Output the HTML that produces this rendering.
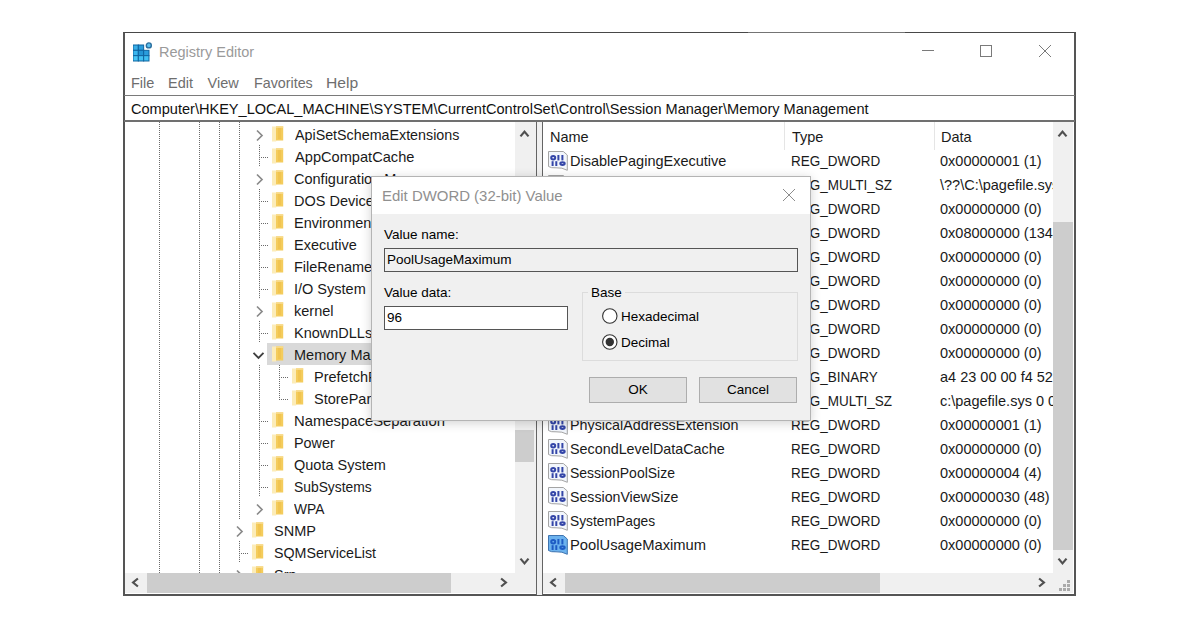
<!DOCTYPE html><html><head><meta charset="utf-8"><style>
html,body{margin:0;padding:0;background:#fff;width:1200px;height:628px;overflow:hidden;position:relative}
.t{position:absolute;white-space:nowrap;font-family:"Liberation Sans", sans-serif}
</style></head><body>
<div style="position:absolute;left:123px;top:32px;width:953px;height:564px;background:#fff;box-sizing:border-box;border-top:1px solid #484848;border-left:2px solid #555;border-right:2px solid #555;border-bottom:2px solid #555"></div>
<div style="position:absolute;left:748px;top:32px;width:157px;height:1px;background:#747474"></div>
<svg style="position:absolute;left:133px;top:42px" width="20" height="20" viewBox="0 0 20 20"><rect x="0.00" y="3.00" width="5.33" height="5.33" fill="#3aaee6" stroke="#0f64a0" stroke-width="1"/><rect x="5.33" y="3.00" width="5.33" height="5.33" fill="#2a9ddc" stroke="#0f64a0" stroke-width="1"/><rect x="0.00" y="8.33" width="5.33" height="5.33" fill="#3ab6ee" stroke="#0f64a0" stroke-width="1"/><rect x="5.33" y="8.33" width="5.33" height="5.33" fill="#2294d4" stroke="#0f64a0" stroke-width="1"/><rect x="10.66" y="8.33" width="5.33" height="5.33" fill="#2a9ddc" stroke="#0f64a0" stroke-width="1"/><rect x="0.00" y="13.66" width="5.33" height="5.33" fill="#48c6f6" stroke="#0f64a0" stroke-width="1"/><rect x="5.33" y="13.66" width="5.33" height="5.33" fill="#40c0f2" stroke="#0f64a0" stroke-width="1"/><rect x="10.66" y="13.66" width="5.33" height="5.33" fill="#40c0f2" stroke="#0f64a0" stroke-width="1"/><circle cx="15.8" cy="3.4" r="2.5" fill="#5cc0ee" stroke="#2a6e9e" stroke-width="1.4"/></svg>
<div class="t" style="left:159px;top:41.5px;font-size:14.5px;line-height:20px;color:#9a9a9a;">Registry Editor</div>
<svg style="position:absolute;left:915px;top:40px" width="145" height="22" viewBox="0 0 145 22"><line x1="7" y1="10.5" x2="19" y2="10.5" stroke="#7a7a7a" stroke-width="1"/><rect x="65.5" y="5.5" width="11" height="11" fill="none" stroke="#7a7a7a" stroke-width="1"/><line x1="124" y1="5" x2="136" y2="17" stroke="#7a7a7a" stroke-width="1"/><line x1="136" y1="5" x2="124" y2="17" stroke="#7a7a7a" stroke-width="1"/></svg>
<div class="t" style="left:131px;top:73px;font-size:14.5px;line-height:20px;color:#6e6e6e;">File</div>
<div class="t" style="left:168px;top:73px;font-size:14.5px;line-height:20px;color:#6e6e6e;">Edit</div>
<div class="t" style="left:207.5px;top:73px;font-size:14.5px;line-height:20px;color:#6e6e6e;">View</div>
<div class="t" style="left:253.5px;top:73px;font-size:14.5px;line-height:20px;color:#6e6e6e;transform:scaleX(0.985);transform-origin:0 0;">Favorites</div>
<div class="t" style="left:326px;top:73px;font-size:14.5px;line-height:20px;color:#6e6e6e;transform:scaleX(1.08);transform-origin:0 0;">Help</div>
<div style="position:absolute;left:124px;top:95px;width:951px;height:1px;background:#7a7a7a"></div>
<div style="position:absolute;left:124px;top:120px;width:951px;height:2px;background:#707070"></div>
<div class="t" style="left:131px;top:99px;font-size:14.5px;line-height:20px;color:#111;transform:scaleX(1.0035);transform-origin:0 0;">Computer\HKEY_LOCAL_MACHINE\SYSTEM\CurrentControlSet\Control\Session Manager\Memory Management</div>
<div style="position:absolute;left:125px;top:122px;width:390px;height:451px;overflow:hidden">
<div style="position:absolute;left:34px;top:0px;width:1px;height:451px;background:repeating-linear-gradient(to bottom,#6a6a6a 0 1px,transparent 1px 2px)"></div>
<div style="position:absolute;left:74px;top:0px;width:1px;height:451px;background:repeating-linear-gradient(to bottom,#6a6a6a 0 1px,transparent 1px 2px)"></div>
<div style="position:absolute;left:94px;top:0px;width:1px;height:451px;background:repeating-linear-gradient(to bottom,#6a6a6a 0 1px,transparent 1px 2px)"></div>
<div style="position:absolute;left:114px;top:0px;width:1px;height:397px;background:repeating-linear-gradient(to bottom,#6a6a6a 0 1px,transparent 1px 2px)"></div>
<div style="position:absolute;left:134px;top:23px;width:1px;height:22px;background:repeating-linear-gradient(to bottom,#6a6a6a 0 1px,transparent 1px 2px)"></div>
<div style="position:absolute;left:134px;top:67px;width:1px;height:22px;background:repeating-linear-gradient(to bottom,#6a6a6a 0 1px,transparent 1px 2px)"></div>
<div style="position:absolute;left:134px;top:89px;width:1px;height:22px;background:repeating-linear-gradient(to bottom,#6a6a6a 0 1px,transparent 1px 2px)"></div>
<div style="position:absolute;left:134px;top:111px;width:1px;height:22px;background:repeating-linear-gradient(to bottom,#6a6a6a 0 1px,transparent 1px 2px)"></div>
<div style="position:absolute;left:134px;top:133px;width:1px;height:22px;background:repeating-linear-gradient(to bottom,#6a6a6a 0 1px,transparent 1px 2px)"></div>
<div style="position:absolute;left:134px;top:155px;width:1px;height:22px;background:repeating-linear-gradient(to bottom,#6a6a6a 0 1px,transparent 1px 2px)"></div>
<div style="position:absolute;left:134px;top:199px;width:1px;height:22px;background:repeating-linear-gradient(to bottom,#6a6a6a 0 1px,transparent 1px 2px)"></div>
<div style="position:absolute;left:134px;top:243px;width:1px;height:22px;background:repeating-linear-gradient(to bottom,#6a6a6a 0 1px,transparent 1px 2px)"></div>
<div style="position:absolute;left:134px;top:265px;width:1px;height:22px;background:repeating-linear-gradient(to bottom,#6a6a6a 0 1px,transparent 1px 2px)"></div>
<div style="position:absolute;left:134px;top:287px;width:1px;height:22px;background:repeating-linear-gradient(to bottom,#6a6a6a 0 1px,transparent 1px 2px)"></div>
<div style="position:absolute;left:134px;top:309px;width:1px;height:22px;background:repeating-linear-gradient(to bottom,#6a6a6a 0 1px,transparent 1px 2px)"></div>
<div style="position:absolute;left:134px;top:331px;width:1px;height:22px;background:repeating-linear-gradient(to bottom,#6a6a6a 0 1px,transparent 1px 2px)"></div>
<div style="position:absolute;left:134px;top:353px;width:1px;height:22px;background:repeating-linear-gradient(to bottom,#6a6a6a 0 1px,transparent 1px 2px)"></div>
<div style="position:absolute;left:154px;top:243px;width:1px;height:34px;background:repeating-linear-gradient(to bottom,#6a6a6a 0 1px,transparent 1px 2px)"></div>
<div style="position:absolute;left:114px;top:419px;width:1px;height:22px;background:repeating-linear-gradient(to bottom,#6a6a6a 0 1px,transparent 1px 2px)"></div>
<svg style="position:absolute;left:147px;top:4px" width="13" height="16" viewBox="0 0 13 16"><rect x="0" y="0.5" width="4.2" height="15" fill="#fcecb8"/><rect x="4" y="0.3" width="7.2" height="14.2" fill="#f4cc5c"/><rect x="6" y="2" width="3" height="11" fill="#f1c450"/><rect x="4" y="0.3" width="7.2" height="1.5" fill="#f8dd92"/></svg>
<div class="t" style="left:170px;top:3px;font-size:14.5px;line-height:20px;color:#1a1a1a;transform:scaleX(0.985);transform-origin:0 0;">ApiSetSchemaExtensions</div>
<div style="position:absolute;left:134px;top:35px;width:9px;height:1px;background:repeating-linear-gradient(to right,#6a6a6a 0 1px,transparent 1px 2px)"></div>
<svg style="position:absolute;left:147px;top:26px" width="13" height="16" viewBox="0 0 13 16"><rect x="0" y="0.5" width="4.2" height="15" fill="#fcecb8"/><rect x="4" y="0.3" width="7.2" height="14.2" fill="#f4cc5c"/><rect x="6" y="2" width="3" height="11" fill="#f1c450"/><rect x="4" y="0.3" width="7.2" height="1.5" fill="#f8dd92"/></svg>
<div class="t" style="left:170px;top:25px;font-size:14.5px;line-height:20px;color:#1a1a1a;transform:scaleX(1.008);transform-origin:0 0;">AppCompatCache</div>
<svg style="position:absolute;left:147px;top:48px" width="13" height="16" viewBox="0 0 13 16"><rect x="0" y="0.5" width="4.2" height="15" fill="#fcecb8"/><rect x="4" y="0.3" width="7.2" height="14.2" fill="#f4cc5c"/><rect x="6" y="2" width="3" height="11" fill="#f1c450"/><rect x="4" y="0.3" width="7.2" height="1.5" fill="#f8dd92"/></svg>
<div class="t" style="left:169px;top:47px;font-size:14.5px;line-height:20px;color:#1a1a1a;">Configuration Manager</div>
<div style="position:absolute;left:134px;top:79px;width:9px;height:1px;background:repeating-linear-gradient(to right,#6a6a6a 0 1px,transparent 1px 2px)"></div>
<svg style="position:absolute;left:147px;top:70px" width="13" height="16" viewBox="0 0 13 16"><rect x="0" y="0.5" width="4.2" height="15" fill="#fcecb8"/><rect x="4" y="0.3" width="7.2" height="14.2" fill="#f4cc5c"/><rect x="6" y="2" width="3" height="11" fill="#f1c450"/><rect x="4" y="0.3" width="7.2" height="1.5" fill="#f8dd92"/></svg>
<div class="t" style="left:169px;top:69px;font-size:14.5px;line-height:20px;color:#1a1a1a;">DOS Devices</div>
<div style="position:absolute;left:134px;top:101px;width:9px;height:1px;background:repeating-linear-gradient(to right,#6a6a6a 0 1px,transparent 1px 2px)"></div>
<svg style="position:absolute;left:147px;top:92px" width="13" height="16" viewBox="0 0 13 16"><rect x="0" y="0.5" width="4.2" height="15" fill="#fcecb8"/><rect x="4" y="0.3" width="7.2" height="14.2" fill="#f4cc5c"/><rect x="6" y="2" width="3" height="11" fill="#f1c450"/><rect x="4" y="0.3" width="7.2" height="1.5" fill="#f8dd92"/></svg>
<div class="t" style="left:169px;top:91px;font-size:14.5px;line-height:20px;color:#1a1a1a;">Environment</div>
<div style="position:absolute;left:134px;top:123px;width:9px;height:1px;background:repeating-linear-gradient(to right,#6a6a6a 0 1px,transparent 1px 2px)"></div>
<svg style="position:absolute;left:147px;top:114px" width="13" height="16" viewBox="0 0 13 16"><rect x="0" y="0.5" width="4.2" height="15" fill="#fcecb8"/><rect x="4" y="0.3" width="7.2" height="14.2" fill="#f4cc5c"/><rect x="6" y="2" width="3" height="11" fill="#f1c450"/><rect x="4" y="0.3" width="7.2" height="1.5" fill="#f8dd92"/></svg>
<div class="t" style="left:169px;top:113px;font-size:14.5px;line-height:20px;color:#1a1a1a;">Executive</div>
<div style="position:absolute;left:134px;top:145px;width:9px;height:1px;background:repeating-linear-gradient(to right,#6a6a6a 0 1px,transparent 1px 2px)"></div>
<svg style="position:absolute;left:147px;top:136px" width="13" height="16" viewBox="0 0 13 16"><rect x="0" y="0.5" width="4.2" height="15" fill="#fcecb8"/><rect x="4" y="0.3" width="7.2" height="14.2" fill="#f4cc5c"/><rect x="6" y="2" width="3" height="11" fill="#f1c450"/><rect x="4" y="0.3" width="7.2" height="1.5" fill="#f8dd92"/></svg>
<div class="t" style="left:169px;top:135px;font-size:14.5px;line-height:20px;color:#1a1a1a;">FileRenameOperations</div>
<div style="position:absolute;left:134px;top:167px;width:9px;height:1px;background:repeating-linear-gradient(to right,#6a6a6a 0 1px,transparent 1px 2px)"></div>
<svg style="position:absolute;left:147px;top:158px" width="13" height="16" viewBox="0 0 13 16"><rect x="0" y="0.5" width="4.2" height="15" fill="#fcecb8"/><rect x="4" y="0.3" width="7.2" height="14.2" fill="#f4cc5c"/><rect x="6" y="2" width="3" height="11" fill="#f1c450"/><rect x="4" y="0.3" width="7.2" height="1.5" fill="#f8dd92"/></svg>
<div class="t" style="left:169px;top:157px;font-size:14.5px;line-height:20px;color:#1a1a1a;">I/O System</div>
<svg style="position:absolute;left:147px;top:180px" width="13" height="16" viewBox="0 0 13 16"><rect x="0" y="0.5" width="4.2" height="15" fill="#fcecb8"/><rect x="4" y="0.3" width="7.2" height="14.2" fill="#f4cc5c"/><rect x="6" y="2" width="3" height="11" fill="#f1c450"/><rect x="4" y="0.3" width="7.2" height="1.5" fill="#f8dd92"/></svg>
<div class="t" style="left:169px;top:179px;font-size:14.5px;line-height:20px;color:#1a1a1a;">kernel</div>
<div style="position:absolute;left:134px;top:211px;width:9px;height:1px;background:repeating-linear-gradient(to right,#6a6a6a 0 1px,transparent 1px 2px)"></div>
<svg style="position:absolute;left:147px;top:202px" width="13" height="16" viewBox="0 0 13 16"><rect x="0" y="0.5" width="4.2" height="15" fill="#fcecb8"/><rect x="4" y="0.3" width="7.2" height="14.2" fill="#f4cc5c"/><rect x="6" y="2" width="3" height="11" fill="#f1c450"/><rect x="4" y="0.3" width="7.2" height="1.5" fill="#f8dd92"/></svg>
<div class="t" style="left:169px;top:201px;font-size:14.5px;line-height:20px;color:#1a1a1a;">KnownDLLs</div>
<div style="position:absolute;left:142px;top:221px;width:300px;height:22px;background:#d9d9d9"></div>
<svg style="position:absolute;left:147px;top:224px" width="13" height="16" viewBox="0 0 13 16"><rect x="0" y="0.5" width="4.2" height="15" fill="#fcecb8"/><rect x="4" y="0.3" width="7.2" height="14.2" fill="#f4cc5c"/><rect x="6" y="2" width="3" height="11" fill="#f1c450"/><rect x="4" y="0.3" width="7.2" height="1.5" fill="#f8dd92"/></svg>
<div class="t" style="left:169px;top:223px;font-size:14.5px;line-height:20px;color:#1a1a1a;">Memory Management</div>
<div style="position:absolute;left:154px;top:255px;width:9px;height:1px;background:repeating-linear-gradient(to right,#6a6a6a 0 1px,transparent 1px 2px)"></div>
<svg style="position:absolute;left:167px;top:246px" width="13" height="16" viewBox="0 0 13 16"><rect x="0" y="0.5" width="4.2" height="15" fill="#fcecb8"/><rect x="4" y="0.3" width="7.2" height="14.2" fill="#f4cc5c"/><rect x="6" y="2" width="3" height="11" fill="#f1c450"/><rect x="4" y="0.3" width="7.2" height="1.5" fill="#f8dd92"/></svg>
<div class="t" style="left:189px;top:245px;font-size:14.5px;line-height:20px;color:#1a1a1a;">PrefetchParameters</div>
<div style="position:absolute;left:154px;top:277px;width:9px;height:1px;background:repeating-linear-gradient(to right,#6a6a6a 0 1px,transparent 1px 2px)"></div>
<svg style="position:absolute;left:167px;top:268px" width="13" height="16" viewBox="0 0 13 16"><rect x="0" y="0.5" width="4.2" height="15" fill="#fcecb8"/><rect x="4" y="0.3" width="7.2" height="14.2" fill="#f4cc5c"/><rect x="6" y="2" width="3" height="11" fill="#f1c450"/><rect x="4" y="0.3" width="7.2" height="1.5" fill="#f8dd92"/></svg>
<div class="t" style="left:189px;top:267px;font-size:14.5px;line-height:20px;color:#1a1a1a;">StoreParameters</div>
<div style="position:absolute;left:134px;top:299px;width:9px;height:1px;background:repeating-linear-gradient(to right,#6a6a6a 0 1px,transparent 1px 2px)"></div>
<svg style="position:absolute;left:147px;top:290px" width="13" height="16" viewBox="0 0 13 16"><rect x="0" y="0.5" width="4.2" height="15" fill="#fcecb8"/><rect x="4" y="0.3" width="7.2" height="14.2" fill="#f4cc5c"/><rect x="6" y="2" width="3" height="11" fill="#f1c450"/><rect x="4" y="0.3" width="7.2" height="1.5" fill="#f8dd92"/></svg>
<div class="t" style="left:169px;top:289px;font-size:14.5px;line-height:20px;color:#1a1a1a;transform:scaleX(1.023);transform-origin:0 0;">NamespaceSeparation</div>
<div style="position:absolute;left:134px;top:321px;width:9px;height:1px;background:repeating-linear-gradient(to right,#6a6a6a 0 1px,transparent 1px 2px)"></div>
<svg style="position:absolute;left:147px;top:312px" width="13" height="16" viewBox="0 0 13 16"><rect x="0" y="0.5" width="4.2" height="15" fill="#fcecb8"/><rect x="4" y="0.3" width="7.2" height="14.2" fill="#f4cc5c"/><rect x="6" y="2" width="3" height="11" fill="#f1c450"/><rect x="4" y="0.3" width="7.2" height="1.5" fill="#f8dd92"/></svg>
<div class="t" style="left:169px;top:311px;font-size:14.5px;line-height:20px;color:#1a1a1a;transform:scaleX(0.99);transform-origin:0 0;">Power</div>
<div style="position:absolute;left:134px;top:343px;width:9px;height:1px;background:repeating-linear-gradient(to right,#6a6a6a 0 1px,transparent 1px 2px)"></div>
<svg style="position:absolute;left:147px;top:334px" width="13" height="16" viewBox="0 0 13 16"><rect x="0" y="0.5" width="4.2" height="15" fill="#fcecb8"/><rect x="4" y="0.3" width="7.2" height="14.2" fill="#f4cc5c"/><rect x="6" y="2" width="3" height="11" fill="#f1c450"/><rect x="4" y="0.3" width="7.2" height="1.5" fill="#f8dd92"/></svg>
<div class="t" style="left:169px;top:333px;font-size:14.5px;line-height:20px;color:#1a1a1a;">Quota System</div>
<div style="position:absolute;left:134px;top:365px;width:9px;height:1px;background:repeating-linear-gradient(to right,#6a6a6a 0 1px,transparent 1px 2px)"></div>
<svg style="position:absolute;left:147px;top:356px" width="13" height="16" viewBox="0 0 13 16"><rect x="0" y="0.5" width="4.2" height="15" fill="#fcecb8"/><rect x="4" y="0.3" width="7.2" height="14.2" fill="#f4cc5c"/><rect x="6" y="2" width="3" height="11" fill="#f1c450"/><rect x="4" y="0.3" width="7.2" height="1.5" fill="#f8dd92"/></svg>
<div class="t" style="left:169px;top:355px;font-size:14.5px;line-height:20px;color:#1a1a1a;transform:scaleX(0.955);transform-origin:0 0;">SubSystems</div>
<svg style="position:absolute;left:147px;top:378px" width="13" height="16" viewBox="0 0 13 16"><rect x="0" y="0.5" width="4.2" height="15" fill="#fcecb8"/><rect x="4" y="0.3" width="7.2" height="14.2" fill="#f4cc5c"/><rect x="6" y="2" width="3" height="11" fill="#f1c450"/><rect x="4" y="0.3" width="7.2" height="1.5" fill="#f8dd92"/></svg>
<div class="t" style="left:169px;top:377px;font-size:14.5px;line-height:20px;color:#1a1a1a;transform:scaleX(0.95);transform-origin:0 0;">WPA</div>
<svg style="position:absolute;left:127px;top:400px" width="13" height="16" viewBox="0 0 13 16"><rect x="0" y="0.5" width="4.2" height="15" fill="#fcecb8"/><rect x="4" y="0.3" width="7.2" height="14.2" fill="#f4cc5c"/><rect x="6" y="2" width="3" height="11" fill="#f1c450"/><rect x="4" y="0.3" width="7.2" height="1.5" fill="#f8dd92"/></svg>
<div class="t" style="left:149px;top:399px;font-size:14.5px;line-height:20px;color:#1a1a1a;">SNMP</div>
<div style="position:absolute;left:114px;top:431px;width:9px;height:1px;background:repeating-linear-gradient(to right,#6a6a6a 0 1px,transparent 1px 2px)"></div>
<svg style="position:absolute;left:127px;top:422px" width="13" height="16" viewBox="0 0 13 16"><rect x="0" y="0.5" width="4.2" height="15" fill="#fcecb8"/><rect x="4" y="0.3" width="7.2" height="14.2" fill="#f4cc5c"/><rect x="6" y="2" width="3" height="11" fill="#f1c450"/><rect x="4" y="0.3" width="7.2" height="1.5" fill="#f8dd92"/></svg>
<div class="t" style="left:149px;top:421px;font-size:14.5px;line-height:20px;color:#1a1a1a;transform:scaleX(0.982);transform-origin:0 0;">SQMServiceList</div>
<svg style="position:absolute;left:127px;top:444px" width="13" height="16" viewBox="0 0 13 16"><rect x="0" y="0.5" width="4.2" height="15" fill="#fcecb8"/><rect x="4" y="0.3" width="7.2" height="14.2" fill="#f4cc5c"/><rect x="6" y="2" width="3" height="11" fill="#f1c450"/><rect x="4" y="0.3" width="7.2" height="1.5" fill="#f8dd92"/></svg>
<div class="t" style="left:149px;top:443px;font-size:14.5px;line-height:20px;color:#1a1a1a;">Srp</div>
<svg style="position:absolute;left:0;top:0" width="390" height="451"><polyline points="132.0,8.5 137.0,13.5 132.0,18.5" fill="none" stroke="#8a8a8a" stroke-width="1.7"/><polyline points="132.0,52.5 137.0,57.5 132.0,62.5" fill="none" stroke="#8a8a8a" stroke-width="1.7"/><polyline points="132.0,184.5 137.0,189.5 132.0,194.5" fill="none" stroke="#8a8a8a" stroke-width="1.7"/><polyline points="128.5,230.8 133.5,235.8 138.5,230.8" fill="none" stroke="#404040" stroke-width="1.9"/><polyline points="132.0,382.5 137.0,387.5 132.0,392.5" fill="none" stroke="#8a8a8a" stroke-width="1.7"/><polyline points="112.0,404.5 117.0,409.5 112.0,414.5" fill="none" stroke="#8a8a8a" stroke-width="1.7"/><polyline points="112.0,448.5 117.0,453.5 112.0,458.5" fill="none" stroke="#8a8a8a" stroke-width="1.7"/></svg>
</div>
<div style="position:absolute;left:515px;top:122px;width:21px;height:451px;background:#f0f0f0"></div>
<div style="position:absolute;left:515px;top:430px;width:19px;height:32px;background:#cdcdcd"></div>
<div style="position:absolute;left:125px;top:573px;width:411px;height:20px;background:#f0f0f0"></div>
<div style="position:absolute;left:147px;top:573px;width:304px;height:20px;background:#cdcdcd"></div>
<div style="position:absolute;left:536px;top:122px;width:1px;height:473px;background:#646464"></div>
<div style="position:absolute;left:537px;top:122px;width:5px;height:473px;background:#f0f0f0"></div>
<div style="position:absolute;left:542px;top:122px;width:1px;height:473px;background:#646464"></div>
<div style="position:absolute;left:543px;top:122px;width:510px;height:451px;overflow:hidden">
<div style="position:absolute;left:241px;top:0px;width:1px;height:28px;background:#e5e5e5"></div>
<div style="position:absolute;left:391px;top:0px;width:1px;height:28px;background:#e5e5e5"></div>
<div class="t" style="left:7px;top:5px;font-size:14.5px;line-height:20px;color:#1a1a1a;">Name</div>
<div class="t" style="left:249px;top:5px;font-size:14.5px;line-height:20px;color:#1a1a1a;">Type</div>
<div class="t" style="left:398px;top:5px;font-size:14.5px;line-height:20px;color:#1a1a1a;">Data</div>
<svg style="position:absolute;left:5px;top:29px" width="20" height="20" viewBox="0 0 20 20"><path d="M0.5 0.5 H15.3 L19.3 4 V19.3 Q14 16.3 8 16.8 Q3 17.2 0.5 15.5 Z" fill="#f2f6fc" stroke="#a4a4a4" stroke-width="1"/><ellipse cx="5.2" cy="6.7" rx="2" ry="1.7" fill="none" stroke="#3446a8" stroke-width="2"/><rect x="9.4" y="4" width="2" height="5.4" fill="#3446a8"/><rect x="13.4" y="4" width="2" height="5.4" fill="#3446a8"/><rect x="3.6" y="10.2" width="2" height="4.8" fill="#3446a8"/><rect x="7.3" y="10.2" width="2" height="4.8" fill="#3446a8"/><ellipse cx="14.5" cy="12.6" rx="2.2" ry="1.4" fill="none" stroke="#3446a8" stroke-width="2"/></svg>
<div class="t" style="left:27px;top:29px;font-size:14.5px;line-height:20px;color:#1a1a1a;">DisablePagingExecutive</div>
<div class="t" style="left:248px;top:29px;font-size:14.5px;line-height:20px;color:#1a1a1a;transform:scaleX(0.93);transform-origin:0 0;">REG_DWORD</div>
<div class="t" style="left:397px;top:29px;font-size:14.5px;line-height:20px;color:#1a1a1a;">0x00000001 (1)</div>
<svg style="position:absolute;left:5px;top:53px" width="20" height="20" viewBox="0 0 20 20"><path d="M0.5 0.5 H15.3 L19.3 4 V19.3 Q14 16.3 8 16.8 Q3 17.2 0.5 15.5 Z" fill="#f2f6fc" stroke="#a4a4a4" stroke-width="1"/><ellipse cx="5.2" cy="6.7" rx="2" ry="1.7" fill="none" stroke="#3446a8" stroke-width="2"/><rect x="9.4" y="4" width="2" height="5.4" fill="#3446a8"/><rect x="13.4" y="4" width="2" height="5.4" fill="#3446a8"/><rect x="3.6" y="10.2" width="2" height="4.8" fill="#3446a8"/><rect x="7.3" y="10.2" width="2" height="4.8" fill="#3446a8"/><ellipse cx="14.5" cy="12.6" rx="2.2" ry="1.4" fill="none" stroke="#3446a8" stroke-width="2"/></svg>
<div class="t" style="left:27px;top:53px;font-size:14.5px;line-height:20px;color:#1a1a1a;">ExistingPageFiles</div>
<div class="t" style="left:248px;top:53px;font-size:14.5px;line-height:20px;color:#1a1a1a;transform:scaleX(0.93);transform-origin:0 0;">REG_MULTI_SZ</div>
<div class="t" style="left:397px;top:53px;font-size:14.5px;line-height:20px;color:#1a1a1a;">\??\C:\pagefile.sys</div>
<svg style="position:absolute;left:5px;top:77px" width="20" height="20" viewBox="0 0 20 20"><path d="M0.5 0.5 H15.3 L19.3 4 V19.3 Q14 16.3 8 16.8 Q3 17.2 0.5 15.5 Z" fill="#f2f6fc" stroke="#a4a4a4" stroke-width="1"/><ellipse cx="5.2" cy="6.7" rx="2" ry="1.7" fill="none" stroke="#3446a8" stroke-width="2"/><rect x="9.4" y="4" width="2" height="5.4" fill="#3446a8"/><rect x="13.4" y="4" width="2" height="5.4" fill="#3446a8"/><rect x="3.6" y="10.2" width="2" height="4.8" fill="#3446a8"/><rect x="7.3" y="10.2" width="2" height="4.8" fill="#3446a8"/><ellipse cx="14.5" cy="12.6" rx="2.2" ry="1.4" fill="none" stroke="#3446a8" stroke-width="2"/></svg>
<div class="t" style="left:27px;top:77px;font-size:14.5px;line-height:20px;color:#1a1a1a;">LargeSystemCache</div>
<div class="t" style="left:248px;top:77px;font-size:14.5px;line-height:20px;color:#1a1a1a;transform:scaleX(0.93);transform-origin:0 0;">REG_DWORD</div>
<div class="t" style="left:397px;top:77px;font-size:14.5px;line-height:20px;color:#1a1a1a;">0x00000000 (0)</div>
<svg style="position:absolute;left:5px;top:101px" width="20" height="20" viewBox="0 0 20 20"><path d="M0.5 0.5 H15.3 L19.3 4 V19.3 Q14 16.3 8 16.8 Q3 17.2 0.5 15.5 Z" fill="#f2f6fc" stroke="#a4a4a4" stroke-width="1"/><ellipse cx="5.2" cy="6.7" rx="2" ry="1.7" fill="none" stroke="#3446a8" stroke-width="2"/><rect x="9.4" y="4" width="2" height="5.4" fill="#3446a8"/><rect x="13.4" y="4" width="2" height="5.4" fill="#3446a8"/><rect x="3.6" y="10.2" width="2" height="4.8" fill="#3446a8"/><rect x="7.3" y="10.2" width="2" height="4.8" fill="#3446a8"/><ellipse cx="14.5" cy="12.6" rx="2.2" ry="1.4" fill="none" stroke="#3446a8" stroke-width="2"/></svg>
<div class="t" style="left:27px;top:101px;font-size:14.5px;line-height:20px;color:#1a1a1a;">NonPagedPoolQuota</div>
<div class="t" style="left:248px;top:101px;font-size:14.5px;line-height:20px;color:#1a1a1a;transform:scaleX(0.93);transform-origin:0 0;">REG_DWORD</div>
<div class="t" style="left:397px;top:101px;font-size:14.5px;line-height:20px;color:#1a1a1a;">0x08000000 (134217728)</div>
<svg style="position:absolute;left:5px;top:125px" width="20" height="20" viewBox="0 0 20 20"><path d="M0.5 0.5 H15.3 L19.3 4 V19.3 Q14 16.3 8 16.8 Q3 17.2 0.5 15.5 Z" fill="#f2f6fc" stroke="#a4a4a4" stroke-width="1"/><ellipse cx="5.2" cy="6.7" rx="2" ry="1.7" fill="none" stroke="#3446a8" stroke-width="2"/><rect x="9.4" y="4" width="2" height="5.4" fill="#3446a8"/><rect x="13.4" y="4" width="2" height="5.4" fill="#3446a8"/><rect x="3.6" y="10.2" width="2" height="4.8" fill="#3446a8"/><rect x="7.3" y="10.2" width="2" height="4.8" fill="#3446a8"/><ellipse cx="14.5" cy="12.6" rx="2.2" ry="1.4" fill="none" stroke="#3446a8" stroke-width="2"/></svg>
<div class="t" style="left:27px;top:125px;font-size:14.5px;line-height:20px;color:#1a1a1a;">NonPagedPoolSize</div>
<div class="t" style="left:248px;top:125px;font-size:14.5px;line-height:20px;color:#1a1a1a;transform:scaleX(0.93);transform-origin:0 0;">REG_DWORD</div>
<div class="t" style="left:397px;top:125px;font-size:14.5px;line-height:20px;color:#1a1a1a;">0x00000000 (0)</div>
<svg style="position:absolute;left:5px;top:149px" width="20" height="20" viewBox="0 0 20 20"><path d="M0.5 0.5 H15.3 L19.3 4 V19.3 Q14 16.3 8 16.8 Q3 17.2 0.5 15.5 Z" fill="#f2f6fc" stroke="#a4a4a4" stroke-width="1"/><ellipse cx="5.2" cy="6.7" rx="2" ry="1.7" fill="none" stroke="#3446a8" stroke-width="2"/><rect x="9.4" y="4" width="2" height="5.4" fill="#3446a8"/><rect x="13.4" y="4" width="2" height="5.4" fill="#3446a8"/><rect x="3.6" y="10.2" width="2" height="4.8" fill="#3446a8"/><rect x="7.3" y="10.2" width="2" height="4.8" fill="#3446a8"/><ellipse cx="14.5" cy="12.6" rx="2.2" ry="1.4" fill="none" stroke="#3446a8" stroke-width="2"/></svg>
<div class="t" style="left:27px;top:149px;font-size:14.5px;line-height:20px;color:#1a1a1a;">PagedPoolQuota</div>
<div class="t" style="left:248px;top:149px;font-size:14.5px;line-height:20px;color:#1a1a1a;transform:scaleX(0.93);transform-origin:0 0;">REG_DWORD</div>
<div class="t" style="left:397px;top:149px;font-size:14.5px;line-height:20px;color:#1a1a1a;">0x00000000 (0)</div>
<svg style="position:absolute;left:5px;top:173px" width="20" height="20" viewBox="0 0 20 20"><path d="M0.5 0.5 H15.3 L19.3 4 V19.3 Q14 16.3 8 16.8 Q3 17.2 0.5 15.5 Z" fill="#f2f6fc" stroke="#a4a4a4" stroke-width="1"/><ellipse cx="5.2" cy="6.7" rx="2" ry="1.7" fill="none" stroke="#3446a8" stroke-width="2"/><rect x="9.4" y="4" width="2" height="5.4" fill="#3446a8"/><rect x="13.4" y="4" width="2" height="5.4" fill="#3446a8"/><rect x="3.6" y="10.2" width="2" height="4.8" fill="#3446a8"/><rect x="7.3" y="10.2" width="2" height="4.8" fill="#3446a8"/><ellipse cx="14.5" cy="12.6" rx="2.2" ry="1.4" fill="none" stroke="#3446a8" stroke-width="2"/></svg>
<div class="t" style="left:27px;top:173px;font-size:14.5px;line-height:20px;color:#1a1a1a;">PagedPoolSize</div>
<div class="t" style="left:248px;top:173px;font-size:14.5px;line-height:20px;color:#1a1a1a;transform:scaleX(0.93);transform-origin:0 0;">REG_DWORD</div>
<div class="t" style="left:397px;top:173px;font-size:14.5px;line-height:20px;color:#1a1a1a;">0x00000000 (0)</div>
<svg style="position:absolute;left:5px;top:197px" width="20" height="20" viewBox="0 0 20 20"><path d="M0.5 0.5 H15.3 L19.3 4 V19.3 Q14 16.3 8 16.8 Q3 17.2 0.5 15.5 Z" fill="#f2f6fc" stroke="#a4a4a4" stroke-width="1"/><ellipse cx="5.2" cy="6.7" rx="2" ry="1.7" fill="none" stroke="#3446a8" stroke-width="2"/><rect x="9.4" y="4" width="2" height="5.4" fill="#3446a8"/><rect x="13.4" y="4" width="2" height="5.4" fill="#3446a8"/><rect x="3.6" y="10.2" width="2" height="4.8" fill="#3446a8"/><rect x="7.3" y="10.2" width="2" height="4.8" fill="#3446a8"/><ellipse cx="14.5" cy="12.6" rx="2.2" ry="1.4" fill="none" stroke="#3446a8" stroke-width="2"/></svg>
<div class="t" style="left:27px;top:197px;font-size:14.5px;line-height:20px;color:#1a1a1a;">PagingFiles2</div>
<div class="t" style="left:248px;top:197px;font-size:14.5px;line-height:20px;color:#1a1a1a;transform:scaleX(0.93);transform-origin:0 0;">REG_DWORD</div>
<div class="t" style="left:397px;top:197px;font-size:14.5px;line-height:20px;color:#1a1a1a;">0x00000000 (0)</div>
<svg style="position:absolute;left:5px;top:221px" width="20" height="20" viewBox="0 0 20 20"><path d="M0.5 0.5 H15.3 L19.3 4 V19.3 Q14 16.3 8 16.8 Q3 17.2 0.5 15.5 Z" fill="#f2f6fc" stroke="#a4a4a4" stroke-width="1"/><ellipse cx="5.2" cy="6.7" rx="2" ry="1.7" fill="none" stroke="#3446a8" stroke-width="2"/><rect x="9.4" y="4" width="2" height="5.4" fill="#3446a8"/><rect x="13.4" y="4" width="2" height="5.4" fill="#3446a8"/><rect x="3.6" y="10.2" width="2" height="4.8" fill="#3446a8"/><rect x="7.3" y="10.2" width="2" height="4.8" fill="#3446a8"/><ellipse cx="14.5" cy="12.6" rx="2.2" ry="1.4" fill="none" stroke="#3446a8" stroke-width="2"/></svg>
<div class="t" style="left:27px;top:221px;font-size:14.5px;line-height:20px;color:#1a1a1a;">PagingFiles3</div>
<div class="t" style="left:248px;top:221px;font-size:14.5px;line-height:20px;color:#1a1a1a;transform:scaleX(0.93);transform-origin:0 0;">REG_DWORD</div>
<div class="t" style="left:397px;top:221px;font-size:14.5px;line-height:20px;color:#1a1a1a;">0x00000000 (0)</div>
<svg style="position:absolute;left:5px;top:245px" width="20" height="20" viewBox="0 0 20 20"><path d="M0.5 0.5 H15.3 L19.3 4 V19.3 Q14 16.3 8 16.8 Q3 17.2 0.5 15.5 Z" fill="#f2f6fc" stroke="#a4a4a4" stroke-width="1"/><ellipse cx="5.2" cy="6.7" rx="2" ry="1.7" fill="none" stroke="#3446a8" stroke-width="2"/><rect x="9.4" y="4" width="2" height="5.4" fill="#3446a8"/><rect x="13.4" y="4" width="2" height="5.4" fill="#3446a8"/><rect x="3.6" y="10.2" width="2" height="4.8" fill="#3446a8"/><rect x="7.3" y="10.2" width="2" height="4.8" fill="#3446a8"/><ellipse cx="14.5" cy="12.6" rx="2.2" ry="1.4" fill="none" stroke="#3446a8" stroke-width="2"/></svg>
<div class="t" style="left:27px;top:245px;font-size:14.5px;line-height:20px;color:#1a1a1a;">FeatureSettings</div>
<div class="t" style="left:248px;top:245px;font-size:14.5px;line-height:20px;color:#1a1a1a;transform:scaleX(0.93);transform-origin:0 0;">REG_BINARY</div>
<div class="t" style="left:397px;top:245px;font-size:14.5px;line-height:20px;color:#1a1a1a;">a4 23 00 00 f4 52 00 00</div>
<svg style="position:absolute;left:5px;top:269px" width="20" height="20" viewBox="0 0 20 20"><path d="M0.5 0.5 H15.3 L19.3 4 V19.3 Q14 16.3 8 16.8 Q3 17.2 0.5 15.5 Z" fill="#f2f6fc" stroke="#a4a4a4" stroke-width="1"/><ellipse cx="5.2" cy="6.7" rx="2" ry="1.7" fill="none" stroke="#3446a8" stroke-width="2"/><rect x="9.4" y="4" width="2" height="5.4" fill="#3446a8"/><rect x="13.4" y="4" width="2" height="5.4" fill="#3446a8"/><rect x="3.6" y="10.2" width="2" height="4.8" fill="#3446a8"/><rect x="7.3" y="10.2" width="2" height="4.8" fill="#3446a8"/><ellipse cx="14.5" cy="12.6" rx="2.2" ry="1.4" fill="none" stroke="#3446a8" stroke-width="2"/></svg>
<div class="t" style="left:27px;top:269px;font-size:14.5px;line-height:20px;color:#1a1a1a;">PagingFiles</div>
<div class="t" style="left:248px;top:269px;font-size:14.5px;line-height:20px;color:#1a1a1a;transform:scaleX(0.93);transform-origin:0 0;">REG_MULTI_SZ</div>
<div class="t" style="left:397px;top:269px;font-size:14.5px;line-height:20px;color:#1a1a1a;">c:\pagefile.sys 0 0</div>
<svg style="position:absolute;left:5px;top:293px" width="20" height="20" viewBox="0 0 20 20"><path d="M0.5 0.5 H15.3 L19.3 4 V19.3 Q14 16.3 8 16.8 Q3 17.2 0.5 15.5 Z" fill="#f2f6fc" stroke="#a4a4a4" stroke-width="1"/><ellipse cx="5.2" cy="6.7" rx="2" ry="1.7" fill="none" stroke="#3446a8" stroke-width="2"/><rect x="9.4" y="4" width="2" height="5.4" fill="#3446a8"/><rect x="13.4" y="4" width="2" height="5.4" fill="#3446a8"/><rect x="3.6" y="10.2" width="2" height="4.8" fill="#3446a8"/><rect x="7.3" y="10.2" width="2" height="4.8" fill="#3446a8"/><ellipse cx="14.5" cy="12.6" rx="2.2" ry="1.4" fill="none" stroke="#3446a8" stroke-width="2"/></svg>
<div class="t" style="left:27px;top:293px;font-size:14.5px;line-height:20px;color:#1a1a1a;transform:scaleX(0.986);transform-origin:0 0;">PhysicalAddressExtension</div>
<div class="t" style="left:248px;top:293px;font-size:14.5px;line-height:20px;color:#1a1a1a;transform:scaleX(0.93);transform-origin:0 0;">REG_DWORD</div>
<div class="t" style="left:397px;top:293px;font-size:14.5px;line-height:20px;color:#1a1a1a;">0x00000001 (1)</div>
<svg style="position:absolute;left:5px;top:317px" width="20" height="20" viewBox="0 0 20 20"><path d="M0.5 0.5 H15.3 L19.3 4 V19.3 Q14 16.3 8 16.8 Q3 17.2 0.5 15.5 Z" fill="#f2f6fc" stroke="#a4a4a4" stroke-width="1"/><ellipse cx="5.2" cy="6.7" rx="2" ry="1.7" fill="none" stroke="#3446a8" stroke-width="2"/><rect x="9.4" y="4" width="2" height="5.4" fill="#3446a8"/><rect x="13.4" y="4" width="2" height="5.4" fill="#3446a8"/><rect x="3.6" y="10.2" width="2" height="4.8" fill="#3446a8"/><rect x="7.3" y="10.2" width="2" height="4.8" fill="#3446a8"/><ellipse cx="14.5" cy="12.6" rx="2.2" ry="1.4" fill="none" stroke="#3446a8" stroke-width="2"/></svg>
<div class="t" style="left:27px;top:317px;font-size:14.5px;line-height:20px;color:#1a1a1a;transform:scaleX(0.989);transform-origin:0 0;">SecondLevelDataCache</div>
<div class="t" style="left:248px;top:317px;font-size:14.5px;line-height:20px;color:#1a1a1a;transform:scaleX(0.93);transform-origin:0 0;">REG_DWORD</div>
<div class="t" style="left:397px;top:317px;font-size:14.5px;line-height:20px;color:#1a1a1a;">0x00000000 (0)</div>
<svg style="position:absolute;left:5px;top:341px" width="20" height="20" viewBox="0 0 20 20"><path d="M0.5 0.5 H15.3 L19.3 4 V19.3 Q14 16.3 8 16.8 Q3 17.2 0.5 15.5 Z" fill="#f2f6fc" stroke="#a4a4a4" stroke-width="1"/><ellipse cx="5.2" cy="6.7" rx="2" ry="1.7" fill="none" stroke="#3446a8" stroke-width="2"/><rect x="9.4" y="4" width="2" height="5.4" fill="#3446a8"/><rect x="13.4" y="4" width="2" height="5.4" fill="#3446a8"/><rect x="3.6" y="10.2" width="2" height="4.8" fill="#3446a8"/><rect x="7.3" y="10.2" width="2" height="4.8" fill="#3446a8"/><ellipse cx="14.5" cy="12.6" rx="2.2" ry="1.4" fill="none" stroke="#3446a8" stroke-width="2"/></svg>
<div class="t" style="left:27px;top:341px;font-size:14.5px;line-height:20px;color:#1a1a1a;transform:scaleX(0.965);transform-origin:0 0;">SessionPoolSize</div>
<div class="t" style="left:248px;top:341px;font-size:14.5px;line-height:20px;color:#1a1a1a;transform:scaleX(0.93);transform-origin:0 0;">REG_DWORD</div>
<div class="t" style="left:397px;top:341px;font-size:14.5px;line-height:20px;color:#1a1a1a;">0x00000004 (4)</div>
<svg style="position:absolute;left:5px;top:365px" width="20" height="20" viewBox="0 0 20 20"><path d="M0.5 0.5 H15.3 L19.3 4 V19.3 Q14 16.3 8 16.8 Q3 17.2 0.5 15.5 Z" fill="#f2f6fc" stroke="#a4a4a4" stroke-width="1"/><ellipse cx="5.2" cy="6.7" rx="2" ry="1.7" fill="none" stroke="#3446a8" stroke-width="2"/><rect x="9.4" y="4" width="2" height="5.4" fill="#3446a8"/><rect x="13.4" y="4" width="2" height="5.4" fill="#3446a8"/><rect x="3.6" y="10.2" width="2" height="4.8" fill="#3446a8"/><rect x="7.3" y="10.2" width="2" height="4.8" fill="#3446a8"/><ellipse cx="14.5" cy="12.6" rx="2.2" ry="1.4" fill="none" stroke="#3446a8" stroke-width="2"/></svg>
<div class="t" style="left:27px;top:365px;font-size:14.5px;line-height:20px;color:#1a1a1a;transform:scaleX(0.977);transform-origin:0 0;">SessionViewSize</div>
<div class="t" style="left:248px;top:365px;font-size:14.5px;line-height:20px;color:#1a1a1a;transform:scaleX(0.93);transform-origin:0 0;">REG_DWORD</div>
<div class="t" style="left:397px;top:365px;font-size:14.5px;line-height:20px;color:#1a1a1a;">0x00000030 (48)</div>
<svg style="position:absolute;left:5px;top:389px" width="20" height="20" viewBox="0 0 20 20"><path d="M0.5 0.5 H15.3 L19.3 4 V19.3 Q14 16.3 8 16.8 Q3 17.2 0.5 15.5 Z" fill="#f2f6fc" stroke="#a4a4a4" stroke-width="1"/><ellipse cx="5.2" cy="6.7" rx="2" ry="1.7" fill="none" stroke="#3446a8" stroke-width="2"/><rect x="9.4" y="4" width="2" height="5.4" fill="#3446a8"/><rect x="13.4" y="4" width="2" height="5.4" fill="#3446a8"/><rect x="3.6" y="10.2" width="2" height="4.8" fill="#3446a8"/><rect x="7.3" y="10.2" width="2" height="4.8" fill="#3446a8"/><ellipse cx="14.5" cy="12.6" rx="2.2" ry="1.4" fill="none" stroke="#3446a8" stroke-width="2"/></svg>
<div class="t" style="left:27px;top:389px;font-size:14.5px;line-height:20px;color:#1a1a1a;transform:scaleX(0.952);transform-origin:0 0;">SystemPages</div>
<div class="t" style="left:248px;top:389px;font-size:14.5px;line-height:20px;color:#1a1a1a;transform:scaleX(0.93);transform-origin:0 0;">REG_DWORD</div>
<div class="t" style="left:397px;top:389px;font-size:14.5px;line-height:20px;color:#1a1a1a;">0x00000000 (0)</div>
<svg style="position:absolute;left:5px;top:413px" width="20" height="20" viewBox="0 0 20 20"><path d="M0.5 0.5 H15.3 L19.3 4 V19.3 Q14 16.3 8 16.8 Q3 17.2 0.5 15.5 Z" fill="#6cb2ee" stroke="#3f74b0" stroke-width="1"/><ellipse cx="5.2" cy="6.7" rx="2" ry="1.7" fill="none" stroke="#1e5cc4" stroke-width="2"/><rect x="9.4" y="4" width="2" height="5.4" fill="#1e5cc4"/><rect x="13.4" y="4" width="2" height="5.4" fill="#1e5cc4"/><rect x="3.6" y="10.2" width="2" height="4.8" fill="#1e5cc4"/><rect x="7.3" y="10.2" width="2" height="4.8" fill="#1e5cc4"/><ellipse cx="14.5" cy="12.6" rx="2.2" ry="1.4" fill="none" stroke="#1e5cc4" stroke-width="2"/></svg>
<div class="t" style="left:27px;top:413px;font-size:14.5px;line-height:20px;color:#1a1a1a;transform:scaleX(1.017);transform-origin:0 0;">PoolUsageMaximum</div>
<div class="t" style="left:248px;top:413px;font-size:14.5px;line-height:20px;color:#1a1a1a;transform:scaleX(0.93);transform-origin:0 0;">REG_DWORD</div>
<div class="t" style="left:397px;top:413px;font-size:14.5px;line-height:20px;color:#1a1a1a;">0x00000000 (0)</div>
</div>
<div style="position:absolute;left:1053px;top:122px;width:20px;height:451px;background:#f0f0f0"></div>
<div style="position:absolute;left:1053px;top:222px;width:20px;height:328px;background:#cdcdcd"></div>
<div style="position:absolute;left:543px;top:573px;width:510px;height:20px;background:#f0f0f0"></div>
<div style="position:absolute;left:565px;top:573px;width:315px;height:20px;background:#cdcdcd"></div>
<div style="position:absolute;left:1053px;top:573px;width:20px;height:20px;background:#f0f0f0"></div>
<svg style="position:absolute;left:1053px;top:573px" width="21" height="20" viewBox="0 0 21 20"><rect x="14" y="7" width="3" height="3" fill="#aaaaaa"/><rect x="10" y="11" width="3" height="3" fill="#aaaaaa"/><rect x="14" y="11" width="3" height="3" fill="#aaaaaa"/><rect x="6" y="15" width="3" height="3" fill="#aaaaaa"/><rect x="10" y="15" width="3" height="3" fill="#aaaaaa"/><rect x="14" y="15" width="3" height="3" fill="#aaaaaa"/></svg>
<svg style="position:absolute;left:0;top:0" width="1200" height="628"><polyline points="520.5,136.4 524.5,131.6 528.5,136.4" fill="none" stroke="#505050" stroke-width="2.2"/><polyline points="520.5,558.6 524.5,563.4 528.5,558.6" fill="none" stroke="#505050" stroke-width="2.2"/><polyline points="137.9,578.5 133.1,582.5 137.9,586.5" fill="none" stroke="#505050" stroke-width="2.2"/><polyline points="501.1,578.5 505.9,582.5 501.1,586.5" fill="none" stroke="#505050" stroke-width="2.2"/><polyline points="1058.5,136.4 1062.5,131.6 1066.5,136.4" fill="none" stroke="#505050" stroke-width="2.2"/><polyline points="1058.5,558.6 1062.5,563.4 1066.5,558.6" fill="none" stroke="#505050" stroke-width="2.2"/><polyline points="555.9,578.5 551.1,582.5 555.9,586.5" fill="none" stroke="#505050" stroke-width="2.2"/><polyline points="1039.1,578.5 1043.9,582.5 1039.1,586.5" fill="none" stroke="#505050" stroke-width="2.2"/></svg>
<div style="position:absolute;left:371px;top:176px;width:440px;height:245px;box-sizing:border-box;border:1px solid #b4b4b4;background:#f0f0f0;box-shadow:0 2px 10px rgba(0,0,0,0.18)"></div>
<div style="position:absolute;left:372px;top:177px;width:438px;height:37px;background:#fff"></div>
<div class="t" style="left:382px;top:186px;font-size:14.5px;line-height:20px;color:#909090;transform:scaleX(1.03);transform-origin:0 0;">Edit DWORD (32-bit) Value</div>
<svg style="position:absolute;left:780px;top:186px" width="20" height="20" viewBox="0 0 20 20"><line x1="3" y1="3" x2="15" y2="15" stroke="#8c8c8c" stroke-width="1"/><line x1="15" y1="3" x2="3" y2="15" stroke="#8c8c8c" stroke-width="1"/></svg>
<div class="t" style="left:384px;top:225px;font-size:13.5px;line-height:20px;color:#000;">Value name:</div>
<div style="position:absolute;left:384px;top:248px;width:414px;height:24px;box-sizing:border-box;border:1px solid #555;background:#f0f0f0"></div>
<div class="t" style="left:387px;top:250px;font-size:13.5px;line-height:20px;color:#000;">PoolUsageMaximum</div>
<div class="t" style="left:384px;top:283px;font-size:13.5px;line-height:20px;color:#000;">Value data:</div>
<div style="position:absolute;left:384px;top:306px;width:184px;height:24px;box-sizing:border-box;border:1px solid #555;background:#fff"></div>
<div class="t" style="left:387px;top:308px;font-size:13.5px;line-height:20px;color:#000;">96</div>
<div style="position:absolute;left:582px;top:292px;width:216px;height:69px;box-sizing:border-box;border:1px solid #dcdcdc"></div>
<div style="position:absolute;left:588px;top:287px;width:37px;height:12px;background:#f0f0f0"></div>
<div class="t" style="left:591px;top:283px;font-size:13.5px;line-height:20px;color:#000;">Base</div>
<svg style="position:absolute;left:600px;top:306px" width="20" height="46" viewBox="0 0 20 46"><circle cx="9.8" cy="10" r="7.2" fill="#fff" stroke="#333" stroke-width="1.1"/><circle cx="9.8" cy="36" r="7.2" fill="#fff" stroke="#333" stroke-width="1.1"/><circle cx="9.8" cy="36" r="4.2" fill="#333"/></svg>
<div class="t" style="left:621px;top:307px;font-size:13.5px;line-height:20px;color:#000;">Hexadecimal</div>
<div class="t" style="left:621px;top:333px;font-size:13.5px;line-height:20px;color:#000;">Decimal</div>
<div style="position:absolute;left:589px;top:377px;width:98px;height:26px;box-sizing:border-box;border:1px solid #adadad;background:#e1e1e1"></div>
<div style="position:absolute;left:699px;top:377px;width:98px;height:26px;box-sizing:border-box;border:1px solid #adadad;background:#e1e1e1"></div>
<div class="t" style="left:589px;top:377px;width:98px;height:26px;line-height:26px;text-align:center;font-size:13.5px;color:#000">OK</div>
<div class="t" style="left:699px;top:377px;width:98px;height:26px;line-height:26px;text-align:center;font-size:13.5px;color:#000">Cancel</div>
</body></html>
